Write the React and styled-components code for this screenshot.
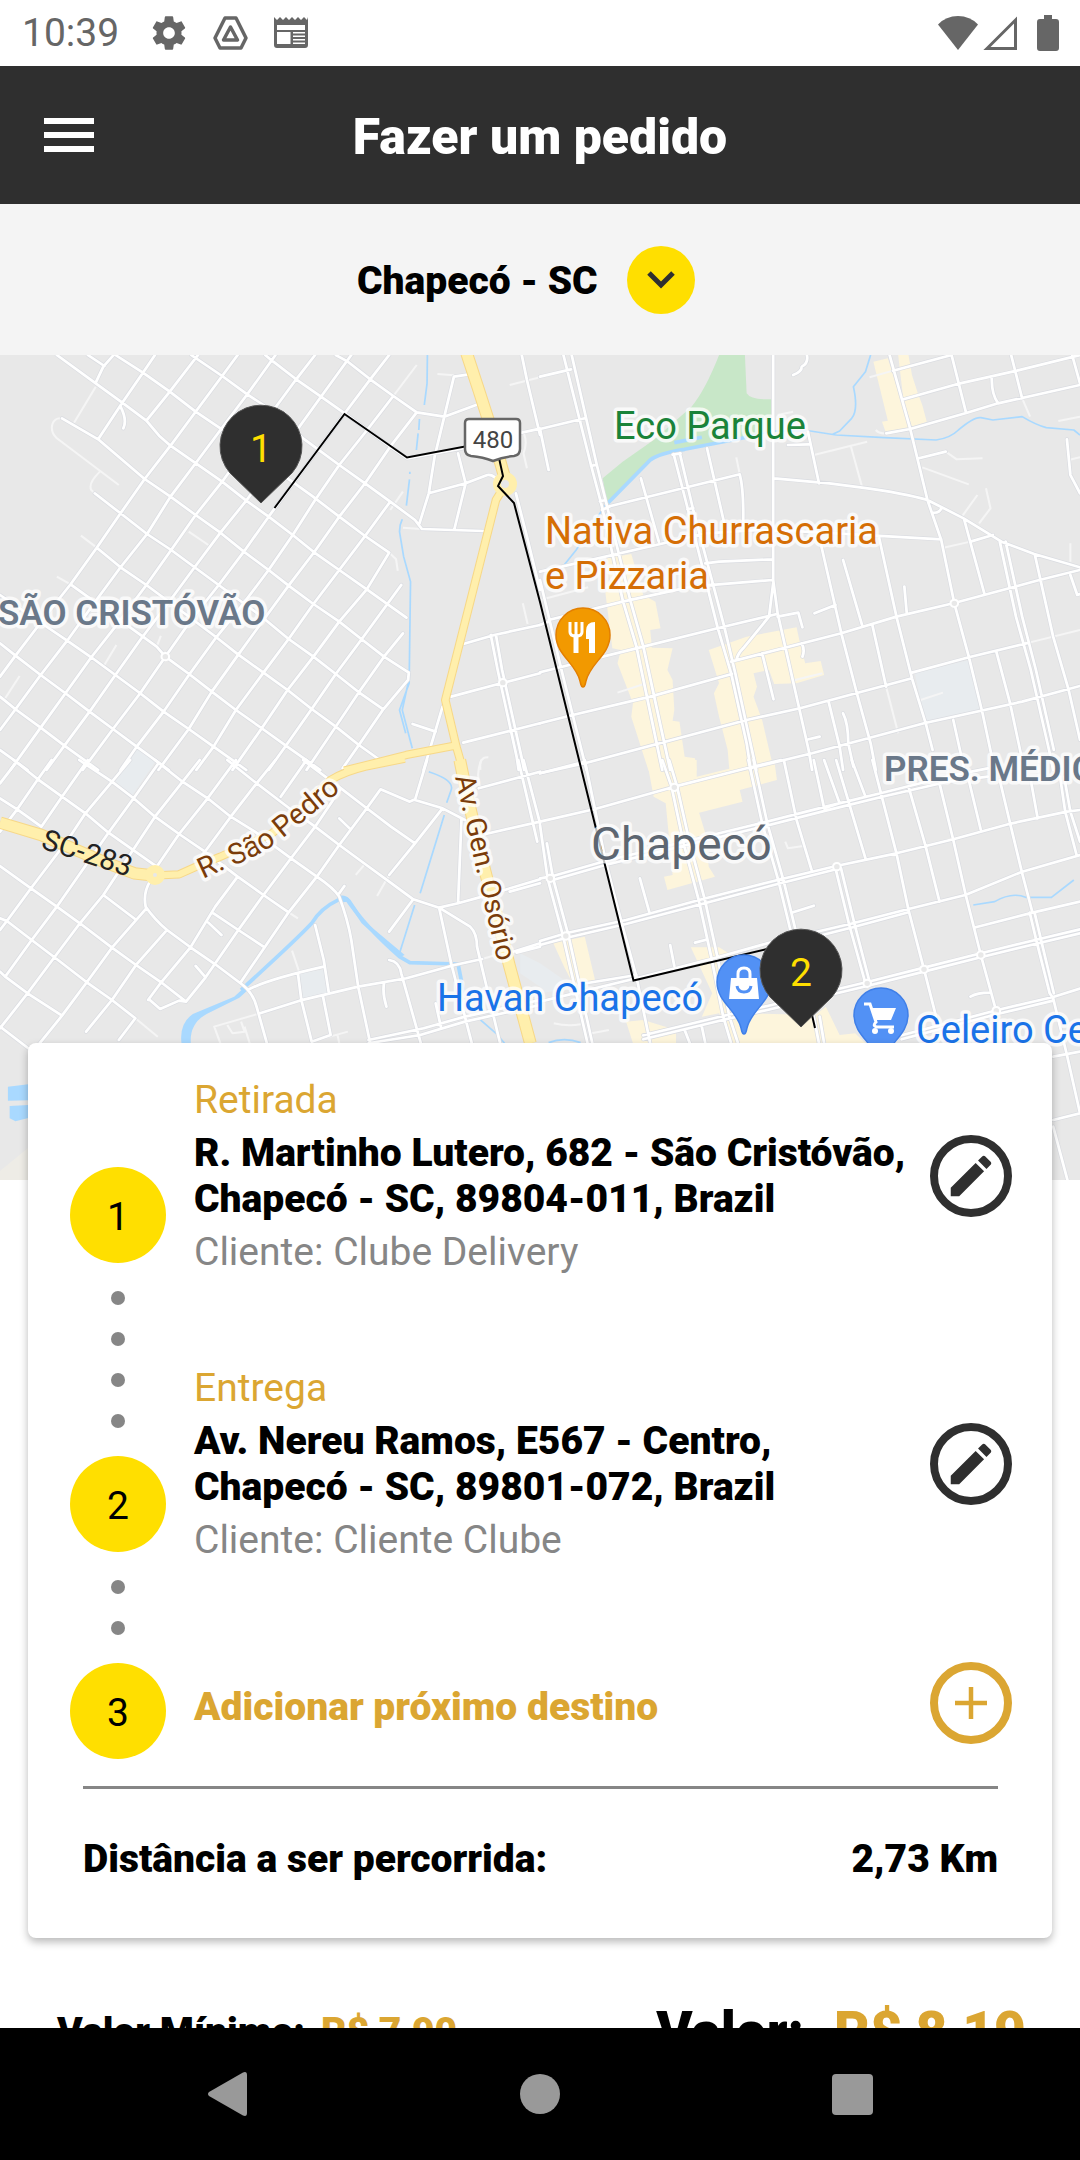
import React from "react";
import styled, { createGlobalStyle } from "styled-components";

const color = {
  ink: "#2f2f2f",
  yellow: "#ffdf00",
  gold: "#dba632",
  grey: "#868686",
  status: "#666666",
};

const GlobalStyle = createGlobalStyle`
  * { box-sizing: border-box; }
  body {
    margin: 0;
    background: #fff;
    color: #000;
    font-family: Roboto, "Noto Sans", sans-serif;
    font-size: 39px;
    line-height: 46px;
  }
  button, select { font: inherit; color: inherit; background: none; border: 0; padding: 0; cursor: pointer; }
  svg { display: block; }
`;

const Screen = styled.div`
  display: flex;
  flex-direction: column;
  height: 100vh;
  overflow: hidden;
`;

/* ---------- status bar ---------- */

const StatusBar = styled.div`
  flex: none;
  display: flex;
  align-items: center;
  justify-content: space-between;
  height: 66px;
  padding: 0 21px 0 22px;
  color: ${color.status};
`;

const StatusGroup = styled.div`
  display: flex;
  align-items: center;
  gap: ${(p) => p.$gap}px;
`;

const Clock = styled.time`
  margin-right: 6px;
`;

const BatterySlot = styled.span`
  padding-left: 14px;
`;

/* ---------- header ---------- */

const Header = styled.header`
  flex: none;
  display: grid;
  grid-template-columns: 50px 1fr 50px;
  align-items: center;
  height: 138px;
  padding: 0 44px;
  background: ${color.ink};
  color: #fff;
`;

const Title = styled.h1`
  margin: 0;
  padding-top: 3px;
  font-size: 50px;
  line-height: 58px;
  font-weight: 900;
  text-align: center;
`;

const IconButton = styled.button`
  display: grid;
  place-items: center;
`;

const Content = styled.main`
  flex: 1;
  min-height: 0;
  overflow-y: auto;
  scrollbar-width: none;
`;

const CityBar = styled.div`
  display: flex;
  align-items: center;
  justify-content: center;
  height: 151px;
  padding-right: 28px;
  background: #f4f4f4;
`;

const CityPicker = styled.label`
  display: grid;
  align-items: center;
`;

const CitySelect = styled.select`
  grid-area: 1 / 1;
  appearance: none;
  height: 68px;
  padding-top: 2px;
  padding-right: 97px;
  font-weight: 900;
`;

const CityChevron = styled.span`
  grid-area: 1 / 1;
  justify-self: end;
  display: grid;
  place-items: center;
  width: 68px;
  height: 68px;
  border-radius: 50%;
  background: ${color.yellow};
  pointer-events: none;
`;

const MapCanvas = styled.svg`
  width: 100%;
  height: auto;
  background: #e8e8e8;
`;

/* ---------- order card ---------- */

const Card = styled.section`
  position: relative;
  margin: -137px 28px 0;
  padding: 34px 40px 56px 42px;
  border-radius: 8px;
  background: #fff;
  box-shadow: 0 4px 8px rgba(0, 0, 0, 0.28);
`;

const Route = styled.div`
  display: flex;
  gap: 28px;
`;

const Rail = styled.div`
  flex: none;
  display: flex;
  flex-direction: column;
  align-items: center;
  gap: 28px;
  padding-top: 90px;
`;

const Badge = styled.span`
  display: grid;
  place-items: center;
  width: 96px;
  height: 96px;
  padding-top: 4px;
  border-radius: 50%;
  background: ${color.yellow};
`;

const Dots = styled.div`
  display: flex;
  flex-direction: column;
  gap: 27px;
`;

const Dot = styled.span`
  width: 14px;
  height: 14px;
  border-radius: 50%;
  background: ${color.grey};
`;

const Stops = styled.div`
  flex: 1;
  min-width: 0;
  display: flex;
  flex-direction: column;
  gap: 90px;
`;

const Stop = styled.article`
  display: flex;
  align-items: center;
  justify-content: space-between;
`;

const StopText = styled.div`
  display: flex;
  flex-direction: column;
  gap: 7px;
`;

const StopKind = styled.span`
  color: ${color.gold};
`;

const Address = styled.strong`
  font-weight: 900;
  white-space: pre-line;
`;

const Client = styled.span`
  color: ${color.grey};
`;

const Ring = styled.span`
  flex: none;
  display: grid;
  place-items: center;
  width: 82px;
  height: 82px;
  border: 8px solid ${(p) => p.$tone};
  border-radius: 50%;
  color: ${(p) => p.$tone};
`;

const AddStop = styled.button`
  display: flex;
  align-items: center;
  justify-content: space-between;
  margin-top: 9px;
  color: ${color.gold};
  font-weight: 900;
`;

const AddLabel = styled.span`
  padding-top: 8px;
`;

const Distance = styled.div`
  display: flex;
  justify-content: space-between;
  margin: 27px 14px 0 13px;
  padding-top: 47px;
  border-top: 3px solid ${color.grey};
  font-weight: 900;
`;

const Prices = styled.div`
  display: flex;
  align-items: center;
  justify-content: space-between;
  padding: 62px 54px 60px 57px;
`;

const Price = styled.div`
  display: flex;
  gap: ${(p) => (p.$large ? 30 : 16)}px;
  font-weight: 900;
  font-size: ${(p) => (p.$large ? 55 : 39)}px;
  line-height: ${(p) => (p.$large ? 64 : 46)}px;
`;

const Amount = styled.span`
  color: ${color.gold};
`;

/* ---------- system navigation ---------- */

const SystemNav = styled.nav`
  flex: none;
  display: flex;
  align-items: center;
  justify-content: center;
  gap: 272px;
  height: 132px;
  background: #000;
  color: #999;
`;

/* ---------- map data: four tiles, each in its own units ---------- */

const TILES = [
  {
    at: [0, 350],
    park: "M395 1190L445 1225L420 1260H345Z",
    built: "",
    green: "",
    water:
      "M1241 15L1240 100L1232 165M1218 207L1216 240M1214 250L1209 300M1190 365V372M1189 388L1180 467M1168 508L1162 525L1160 545L1172 620L1192 695L1188 1000L1160 1080L1178 1150M1188 985L1168 1080L1197 1195",
    waterWide: "",
    roads:
      "M165 15L278 100L355 158L425 212L462 257L495 287L645 395L715 452L780 500L850 555L912 607L985 660L1065 718L1180 803" +
      "M255 15L303 48M335 15L415 68L493 125L568 185L640 235L835 385L905 437L985 500L1060 558L1130 608" +
      "M555 15L645 78L718 133L765 165L880 265L985 345L1060 400L1133 455L1205 510L1225 537L1405 543" +
      "M770 15L790 32L860 88L932 140L1001 190L1120 280L1182 325L1350 294M975 15L1010 35L1075 88L1142 138L1210 187L1290 200L1390 162" +
      "M180 205L285 268L420 387L495 440L568 495L640 548L708 605L780 660L838 707L910 762L985 815L1050 868L1115 920L1187 968" +
      "M275 430L350 490L427 552L497 600L565 652L635 705L760 800L838 867L910 920L975 972L1042 1027L1113 1078" +
      "M281 593L350 652L425 705L555 805L628 862L692 914L765 968L835 1020L905 1077L975 1130L1042 1185L1100 1228" +
      "M205 703L455 890L480 920L550 973L615 1025L685 1080L760 1135L830 1187L930 1260" +
      "M0 735L195 872L265 922L335 975L407 1030L475 1085L548 1137L620 1190L715 1260" +
      "M0 880L45 917L118 975L190 1030L260 1085L328 1137L397 1190L490 1260M0 1040L45 1078L118 1133L187 1187L285 1260M0 1200L80 1260" +
      "M330 15L300 50L278 98M450 15L415 68L355 158L285 268M575 15L493 125L425 212" +
      "M690 15L645 78L568 185L495 287L420 387L350 490L281 593L205 703L150 775L45 917L0 980" +
      "M800 15L718 133L640 240L568 340L495 440L427 552L350 652L280 750L195 872L118 975L45 1078L0 1140" +
      "M915 15L860 88L805 165L645 395L568 495L497 600L425 705L335 830L265 922L190 1030L118 1133L30 1260" +
      "M1020 15L932 140L715 452L640 548L565 652L495 750L407 870L335 975L260 1085L187 1187L135 1260" +
      "M1130 15L1075 88L1001 190L780 500L708 605L635 705L555 810L480 920L407 1030L328 1137L240 1260" +
      "M1142 138L1066 240L985 345L915 450L850 555L780 660L700 770L628 862L550 973L475 1085L397 1190L350 1260" +
      "M1210 187L1133 290L1060 400L985 500L912 607L838 707L765 810L692 914L615 1025L548 1137L460 1260" +
      "M1133 455L1060 558L985 660L910 762L838 867L765 968L685 1080L620 1190L570 1260M1130 608L1065 718L985 815L910 920L835 1020L760 1135L675 1260" +
      "M1165 705L1050 868L975 972L905 1077L830 1187L780 1260M1170 850L1115 920L1042 1027L975 1130L890 1260M1187 968L1185 990L1113 1078L1042 1185L995 1255" +
      "M350 170Q370 210 358 235M1362 73L1318 80L1290 200L1262 320L1245 430L1218 520M1330 310L1352 400L1320 535M1245 430L1352 400L1415 375Q1435 372 1450 400" +
      "M1345 882L1435 855L1568 825M1310 1040L1455 1000L1568 970M1345 1178L1568 1120M1425 855L1445 960L1500 1220L1506 1260M1440 855L1458 960L1514 1220L1522 1260" +
      "M1285 1070L1265 1140L1230 1260M1198 1122L1265 1145M1515 15L1530 90L1568 255M1515 248L1568 236M1498 430L1530 560L1568 720",
    lanes:
      "M180 205C150 200 140 240 165 265L345 405M278 110L215 218M290 365Q255 400 265 420L275 430M235 557L281 593M165 680L205 703M1130 608L1150 628L1155 663M1170 425L1133 480M1210 45L1142 138M1270 72L1318 76M548 545L605 585M455 890L467 858M300 950L338 885M15 1045L57 978M1480 105L1568 82M1515 240Q1535 270 1520 310L1530 355M1518 760L1532 822M1170 533L1222 537M1395 1260Q1390 1220 1418 1222",
    main: "M1355 10L1390 120L1418 210L1470 400L1460 420",
    mainThin: "M1470 400L1440 450L1293 1050L1325 1190L1345 1262M1325 1186L1180 1215L1000 1262",
    circles: [[480, 920], [1460, 998]],
  },
  {
    at: [540, 350],
    park: "M1088 970L1245 930L1280 1085L1120 1115Z",
    built:
      "M195 625L265 612L300 735L335 755L350 835L320 840L325 893L385 895L370 960L385 990L390 1080L385 1112L405 1115L420 1220L450 1225L455 1262H315L265 1100L270 1060L225 940L235 900L210 895L190 730L205 700Z" +
      "M490 900L600 860L745 832L755 880L770 940L815 933L825 975L745 1000L680 1002L665 960L620 970L630 1010L620 1040L645 1110L670 1220L680 1262H550L545 1200L520 1100L505 1030L520 1000Z" +
      "M968 35L1010 25L1075 237L1005 250L993 215L1010 212ZM1040 15H1070L1080 75L1097 130L1110 165L1123 215L1080 230L1055 148Z",
    green:
      "M520 15H595L600 130Q610 147 650 148H675V240L600 260L420 297Q340 307 320 335L195 465L182 385L240 335L330 270L440 170Q480 120 520 15Z",
    water:
      "M190 465L105 600L70 645M600 260L680 243L785 243L860 255L1000 263L1150 270Q1190 265 1215 240Q1260 200 1280 203L1315 210L1400 200Q1440 225 1470 233L1550 240L1568 255M960 15L945 65L910 110Q925 180 905 205L870 243L850 253",
    waterWide: "M198 458L320 330Q345 310 420 298L600 262M390 278L470 262",
    roads:
      "M68 15L148 345L180 470L240 750L280 890L355 1260M92 15L165 345L195 470L262 750L300 890L378 1260M148 348L165 344M174 454L190 450" +
      "M388 312L430 480L515 830L555 970L600 1180L612 1260M406 310L445 480L535 830L567 970L628 1260M385 314L408 310M428 478L445 474M677 15V690L690 790L780 1200L790 1260" +
      "M0 80L90 58M25 360L0 237L130 205M180 480L205 468L580 373Q592 420 590 520M0 665L400 570L480 550L640 540L770 545L1165 568M480 640L520 635L675 628" +
      "M25 810L240 755L440 710L675 690M0 825L25 815M0 967L300 890L515 835L685 793M0 1120L95 1095L320 1040L557 972M0 1270L130 1240L600 1110L755 1075L1080 985" +
      "M555 935L875 850L1035 800L1200 760L1450 690L1568 660M1080 968L1245 922L1420 878M610 1255L790 1210L1115 1120L1400 1055L1568 1008" +
      "M1055 148L1220 100L1385 62L1568 15M1025 62L1195 15M1005 250L1075 237L1240 188L1330 160L1568 105" +
      "M680 385L840 400L930 412Q1060 430 1125 450L1230 505L1340 575L1435 612L1568 652M1015 15L1075 237L1125 450L1165 570L1203 760L1245 920L1285 1090L1320 1260" +
      "M778 245L810 400M815 580L875 850L920 1030L960 1180L975 1260M880 630L935 825M985 565L1035 800L1080 985L1120 1120L1140 1200M965 825L1005 1010" +
      "M1232 510L1290 730M1335 575L1382 800L1425 960L1478 1200L1490 1260M1352 575L1400 800L1440 960L1492 1200M1437 615L1490 860L1535 1020L1568 1170M1195 15L1237 188M1368 15L1400 145M1545 15L1568 100" +
      "M1312 80Q1310 130 1330 160M293 385L345 575M485 295L535 520M1540 675L1560 735L1568 732M1058 710L1065 790M570 930Q575 910 590 895L665 800L677 700M690 800L750 788L762 832M797 790L858 765" +
      "M645 910L678 1048M760 880Q770 900 762 920M838 1055L870 1190L880 1260M880 1090Q895 1120 895 1180L910 1250M1100 325L1178 305M1250 575L1315 555M1530 268L1540 375L1568 430M1140 488Q1160 490 1165 475" +
      "M1200 1110L1230 1250M1325 905L1365 1060L1400 1230M0 690L60 950L95 1095L135 1260M720 285L780 283M735 75Q760 65 760 50Q780 40 775 15M780 1168L812 1160",
    lanes:
      "M795 315L950 275M903 290L935 410M1178 305L1210 328L1285 325M1110 352L1245 403M1225 500L1270 435M1275 520L1308 475L1295 415M0 750L140 712M1420 878L1568 840M1005 1010L1040 1150M570 322L580 373M1165 595L1250 575M957 82L1025 62M690 195L735 185M1505 213L1568 200M225 1028L300 1003M740 990L820 970M1105 1050L1170 1028M1540 580V635M1400 145L1423 200M975 240Q985 252 1005 250M1535 330L1568 322",
    main: "",
    mainThin: "",
    circles: [[1203, 760]],
  },
  {
    at: [0, 760],
    park: "M375 0H455L385 105L335 65ZM870 640L945 628L955 700L880 715ZM1510 580L1568 610V680L1510 640Z",
    built: "",
    green: "",
    water: "M1245 35Q1320 60 1310 90L1297 128M1290 165L1220 400M1204 435L1160 580M1345 690L1350 720M1395 780L1440 820L1465 850",
    waterWide: "M700 690Q860 540 905 490Q930 445 985 418M1005 415Q1060 500 1160 590L1190 608L1330 612L1345 690",
    waterArea:
      "M527 850Q520 790 560 762L680 710L710 682L720 690L695 713L600 762Q550 790 554 850ZM980 410Q1000 400 1018 420L1060 485L1175 585L1160 592L1050 490L1008 425L985 428ZM23 980L82 973V1021L23 1022ZM28 1038L82 1035V1074L45 1084L28 1075Z",
    roads:
      "M40 0L110 58L180 110L248 160L315 218L455 320M230 0L325 65L388 115L450 170L520 222L595 275L690 350L765 405L838 457" +
      "M450 0L530 65L603 115L670 170L740 215L845 295L920 350Q970 385 985 410Q1010 480 1020 540L1040 680L1075 850" +
      "M660 0L745 70L840 145L915 200L985 255L1060 312L1130 365L1200 418L1275 443L1330 430L1400 410L1568 358M1480 395L1568 370M880 0L990 85L1065 145L1135 200L1205 250" +
      "M0 115L50 148L120 200M0 318L90 385L165 440L232 490L325 563L395 615L468 667L540 725M0 475L20 483L92 540L158 592L252 667L325 720L393 775M0 635L15 650L80 700L180 767M0 800L82 865" +
      "M300 405L393 478M435 365Q415 400 423 440Q450 480 485 510L553 562L625 613L705 675Q735 700 745 740L775 850M620 460L692 510L765 560M605 488L643 525M568 618L597 652" +
      "M45 10L0 70M150 0L110 58L50 148L0 215M255 0L180 110L120 200M378 0L248 160L200 235L90 385L20 483L0 510M460 10L388 115L315 218L165 440L92 540L15 650" +
      "M580 0L450 170L300 405L232 490L158 592L80 700L0 805M685 0L603 115L520 222L455 320M425 445L325 563L252 667L180 767L115 850M800 0L745 70L670 170L595 275L575 300M485 510L395 615L325 720L250 815" +
      "M890 0L815 110M690 350L625 440L553 562L468 667L430 720M990 85L915 200L845 295L765 405L692 510L597 652L540 725L520 722L465 747L435 720M393 775L345 840" +
      "M1200 120L1190 125L1105 88L1065 145L985 255L920 350L838 457L700 665M1285 145L1205 250L1130 345M1240 0L1205 120L1285 145L1350 180M1340 175L1330 430M1200 418L1130 515" +
      "M1275 443L1310 610L1370 850M1275 443L1365 500Q1385 520 1385 560L1452 850M1390 85L1568 35M1410 222L1568 185M1505 0L1560 245M1520 0L1568 190M720 690Q770 660 940 620M755 760L870 722L1040 680L1180 655L1320 615L1400 597M1490 575L1568 550" +
      "M915 495L940 600L955 700M865 640L875 720L905 845L960 825L938 710M1130 600Q1160 605 1165 640L1222 850M1115 670Q1110 700 1122 740M1070 840L1230 805L1350 770L1568 720M1070 850L1220 825L1350 785L1568 735M985 175L1015 205M985 400L1000 378M1265 730L1280 800M1500 578L1568 560",
    lanes: "M838 457L865 475M1130 345L1095 408M1060 312L1033 345M393 775L458 830M848 572L870 640M640 850L622 800L755 760M660 795L675 820L710 815L700 785M710 800L725 850M905 845L1010 815M980 825L985 850M1400 597L1440 585M1395 85Q1380 40 1398 0",
    main: "M0 188L120 225L300 305L390 340L450 347M1335 0L1355 100L1400 300L1480 620L1540 850",
    mainThin: "M440 347L520 343L570 320L640 290L790 220L880 140L960 60Q1000 35 1060 20L1175 -4",
    circles: [],
  },
  {
    at: [540, 760],
    park: "M0 610L70 660L65 690L0 700Z",
    built:
      "M310 0H455V50L555 25L550 0H680L688 60L580 90L588 125L462 158L480 220L490 320L508 350L370 390L360 350L385 345L365 130L330 110Z" +
      "M38 548L130 530L162 670L100 680L70 620ZM438 562L520 562L548 580L505 595L600 760L800 765L830 740L870 825L915 820L945 850H560L520 760L470 770L500 700ZM250 785L300 780L395 810V850H270Z",
    green: "",
    water: "M1258 435L1320 425Q1370 395 1410 412L1485 412L1550 360M25 848Q70 830 118 848",
    waterWide: "",
    roads:
      "M0 40L130 5M0 185L160 147L390 80L600 25L700 0M0 355L30 350L190 303L400 250L640 190L830 140L1000 97L1180 50L1300 25M30 362L190 315L400 262L640 202L830 152L1000 109L1180 66L1300 50" +
      "M0 543L75 520L250 480L470 418L690 360L860 318L1035 280L1200 238L1370 190L1530 155L1568 150M0 555L75 534L250 492L470 432L690 372L860 328" +
      "M0 725L280 655L505 595L660 550L900 492L1070 447L1235 405L1400 335L1568 285M820 525L900 504L1070 457M120 672L280 645" +
      "M300 826L540 766L660 738L950 666L1115 623L1280 580L1450 537L1568 508M300 838L540 778L660 750L950 678L1115 635L1280 592L1450 549L1568 520M1050 826L1325 751L1490 711L1568 686M1050 838L1325 763L1490 722M1265 502L1430 458L1568 425" +
      "M0 195L22 355L67 528L138 850M20 250L38 355L83 528L152 850M130 0L190 300L235 480L280 650L320 850M355 0L382 80L417 250L462 425L497 590L532 770L555 850M375 0L398 80L435 250L480 425L515 590L550 770L575 850" +
      "M605 0L645 190L693 365L727 510M620 0L660 190L708 365L742 510M795 770L810 850M812 770L825 850M858 325L898 495L945 670M874 325L914 495L958 670M708 0L745 180L790 335M795 0L825 145L870 130M825 0L870 130M860 0L945 295M905 0L945 110" +
      "M965 0L1035 280L1070 450L1115 628L1150 770M1070 80L1120 260L1160 425M1160 70L1200 240L1235 400L1280 585L1325 755M1245 60L1280 210M1335 60L1365 190L1400 340L1430 458M1425 60L1445 175M1510 50L1525 155L1558 285M1522 50L1540 155L1568 245" +
      "M1422 458L1442 545L1480 700L1490 715L1530 885L1568 1060M1436 458L1456 545L1492 700M1490 890L1568 875M1490 1080L1568 1060M1490 1100L1532 1262M290 355L317 455M378 555L390 618M450 548L480 540M735 457L795 437M1250 710Q1270 698 1305 698M420 810L435 850M470 800L480 850",
    lanes: "M712 245L720 265L765 258M40 790Q80 800 118 793M150 820L200 810",
    main: "",
    mainThin: "",
    circles: [[30, 355], [75, 528], [390, 82], [862, 320], [950, 670], [1115, 628], [1280, 585], [1325, 752]],
  },
];

const LAYERS = [
  { key: "park", fill: "#e8ecef" },
  { key: "built", fill: "#fdf5dc" },
  { key: "green", fill: "#c8e7c8" },
  { key: "waterArea", fill: "#a9d9ff" },
  { key: "water", stroke: "#a9d9ff", width: 5 },
  { key: "waterWide", stroke: "#a9d9ff", width: 11 },
  { key: "lanes", stroke: "#f5f5f5", width: 6 },
  { key: "roads", stroke: "#dadce1", width: 12 },
  { key: "roads", stroke: "#ffffff", width: 8 },
  { key: "mainThin", stroke: "#f7d888", width: 25 },
  { key: "main", stroke: "#f7d888", width: 37 },
  { key: "mainThin", stroke: "#ffefac", width: 19 },
  { key: "main", stroke: "#ffefac", width: 31 },
];

const tileTransform = ([x, y]) => `translate(${x} ${y}) scale(0.3444 0.3333)`;

const MapLabel = styled.text`
  font-family: Roboto, "Noto Sans", sans-serif;
  font-size: ${(p) => p.$size || 38}px;
  font-weight: ${(p) => p.$weight || 400};
  fill: ${(p) => p.$tone};
  stroke: ${(p) => (p.$plain ? "none" : "rgba(255, 255, 255, 0.75)")};
  stroke-width: 7px;
  stroke-linejoin: round;
  paint-order: stroke;
`;

const PinNumber = styled.text`
  font-family: Roboto, "Noto Sans", sans-serif;
  font-size: 39px;
  fill: ${color.yellow};
  text-anchor: middle;
`;

function StopPin({ x, y, number }) {
  return (
    <g transform={`translate(${x} ${y})`}>
      <path d="M0 57L-31 27A41 41 0 1 1 31 27Z" fill={color.ink} stroke="#555" strokeWidth="1" />
      <PinNumber y="16">{number}</PinNumber>
    </g>
  );
}

function PlacePin({ x, y, fill, edge, children }) {
  return (
    <g transform={`translate(${x} ${y})`}>
      <path d="M0 52C-2 52-2 50-3 46C-7 28-27 20-27 0A27 27 0 1 1 27 0C27 20 7 28 3 46C2 50 2 52 0 52Z" fill={fill} stroke={edge} strokeWidth="1.5" />
      {children}
    </g>
  );
}

function DeliveryMap() {
  return (
    <MapCanvas viewBox="0 355 1080 825" role="img" aria-label="Mapa da rota em Chapecó">
      <path d="M0 1171L28 1148V1180H0Z" fill="#eeece6" />
      {LAYERS.map((layer, i) => (
        <g key={i} fill={layer.fill || "none"} stroke={layer.stroke || "none"} strokeWidth={layer.width} strokeLinejoin="round" strokeLinecap={layer.key === "roads" ? "round" : "butt"}>
          {TILES.map((tile, t) => tile[layer.key] && <path key={t} d={tile[layer.key]} transform={tileTransform(tile.at)} />)}
        </g>
      ))}
      {TILES.map((tile, t) => (
        <g key={t} transform={tileTransform(tile.at)} fill="#e8e8e8" stroke="#fff" strokeWidth="6">
          {tile.circles.map(([cx, cy]) => (
            <circle key={`${cx}-${cy}`} cx={cx} cy={cy} r="11" />
          ))}
        </g>
      ))}
      <circle cx="505" cy="484" r="8" fill="#e8e8e8" stroke="#ffefac" strokeWidth="8" />
      <circle cx="155" cy="875" r="6" fill="#e8e8e8" stroke="#ffefac" strokeWidth="8" />
      <path d="M274.500 508L344.500 414L407 457.500L465 446.500L499 458L503 476L498 486L514 503L540 602L633.500 980.500L767 949M812 1015L815 1028" fill="none" stroke="#000" strokeWidth="2" />

      <path d="M469 419H516Q520 419 520 423V449Q520 455 514 456Q503 457 493 461Q483 457 471 456Q465 455 465 449V423Q465 419 469 419Z" fill="#fff" stroke="#666" strokeWidth="2.500" />
      <MapLabel x="493" y="448" textAnchor="middle" $size={24} $tone="#444" $plain>480</MapLabel>

      <MapLabel x="-2" y="625" $size={35} $weight={600} $tone="#6a7889">SÃO CRISTÓVÃO</MapLabel>
      <MapLabel x="614" y="439" $tone="#1a8339">Eco Parque</MapLabel>
      <MapLabel x="545" y="544" $tone="#d56e05">Nativa Churrascaria</MapLabel>
      <MapLabel x="545" y="589" $tone="#d56e05">e Pizzaria</MapLabel>
      <MapLabel x="591" y="860" $size={46} $tone="#5d6671">Chapecó</MapLabel>
      <MapLabel x="884" y="781" $size={35} $weight={600} $tone="#6a7889">PRES. MÉDIC</MapLabel>
      <MapLabel x="437" y="1011" $tone="#1a73e8">Havan Chapecó</MapLabel>
      <MapLabel x="916" y="1043" $tone="#1a73e8">Celeiro Ce</MapLabel>
      <MapLabel transform="translate(40 848) rotate(18)" $size={29} $tone="#222" $plain>SC-283</MapLabel>
      <path id="sao-pedro" d="M203 879L227 868Q262 856 288 834L350 783" fill="none" />
      <MapLabel $size={29} $tone="#7a3c0a">
        <textPath href="#sao-pedro">R. São Pedro</textPath>
      </MapLabel>
      <MapLabel transform="translate(455 777) rotate(77)" $size={28} $tone="#7a3c0a">Av. Gen. Osório</MapLabel>

      <PlacePin x={583} y={635} fill="#f29900" edge="#e37f00">
        <g fill="none" stroke="#fff">
          <path d="M-13-13V-3Q-13 1-7 1Q-1 1-1-3V-13M-7-13V0" strokeWidth="3" />
          <path d="M-7 0V18" strokeWidth="5" />
        </g>
        <path d="M12-13V18H6V4H3V-4Q3-13 12-13Z" fill="#fff" />
      </PlacePin>
      <PlacePin x={744} y={982} fill="#5291f5" edge="#3f7fe8">
        <path d="M-13-4H13L15 17H-15Z" fill="#fff" />
        <path d="M-6-4V-8Q-6-14 0-14Q6-14 6-8V-4" fill="none" stroke="#fff" strokeWidth="3" />
        <path d="M-7 4Q-6 10 0 10Q6 10 7 4" fill="none" stroke="#5291f5" strokeWidth="3" />
      </PlacePin>
      <PlacePin x={881} y={1015} fill="#5291f5" edge="#3f7fe8">
        <path d="M-17-11H-11L-5 7Q-9 11-4 12H13" fill="none" stroke="#fff" strokeWidth="3" />
        <path d="M-10-7H15L10 5H-6Z" fill="#fff" />
        <circle cx="-6" cy="16" r="3" fill="#fff" />
        <circle cx="10" cy="16" r="3" fill="#fff" />
      </PlacePin>

      <StopPin x={261} y={446} number="1" />
      <StopPin x={801} y={970} number="2" />
    </MapCanvas>
  );
}

/* ---------- icons ---------- */

const GearIcon = () => (
  <svg width="40" height="40" viewBox="0 0 24 24" fill="currentColor" aria-hidden="true">
    <path d="M19.430 12.980c.04-.32.07-.64.07-.98s-.03-.66-.07-.98l2.110-1.650c.19-.15.24-.42.12-.64l-2-3.460c-.12-.22-.39-.3-.61-.22l-2.490 1c-.52-.4-1.080-.73-1.690-.98l-.38-2.650C14.460 2.180 14.250 2 14 2h-4c-.25 0-.46.18-.49.42l-.38 2.650c-.61.25-1.170.59-1.690.98l-2.490-1c-.23-.09-.49 0-.61.22l-2 3.460c-.13.22-.07.49.12.64l2.110 1.650c-.04.32-.07.65-.07.98s.03.66.07.98l-2.110 1.650c-.19.15-.24.42-.12.64l2 3.460c.12.22.39.3.61.22l2.490-1c.52.4 1.080.73 1.690.98l.38 2.650c.03.24.24.42.49.42h4c.25 0 .46-.18.49-.42l.38-2.650c.61-.25 1.170-.59 1.690-.98l2.490 1c.23.09.49 0 .61-.22l2-3.460c.12-.22.07-.49-.12-.64l-2.110-1.650zM12 15.500c-1.930 0-3.500-1.570-3.500-3.500s1.570-3.500 3.500-3.500 3.500 1.570 3.500 3.500-1.570 3.500-3.500 3.500z" />
  </svg>
);

const DriveIcon = () => (
  <svg width="36" height="36" viewBox="0 0 36 36" fill="none" stroke="currentColor" strokeLinejoin="round" aria-hidden="true">
    <path d="M12 3H23L33 23L28 33H7L2 23Z" strokeWidth="3.500" />
    <path d="M17.500 12L24.500 25H10.500Z" strokeWidth="3.500" />
  </svg>
);

const NewsIcon = () => (
  <svg width="36" height="34" viewBox="0 0 36 34" aria-hidden="true">
    <path d="M1 1L4 4L7 1L10 4L13 1L16 4L19 1L22 4L25 1L28 4L31 1L34 4L35 1V29Q35 32 32 32H4Q1 32 1 29Z" fill="currentColor" />
    <path d="M4 9H32V14H4ZM4 16H17.500V28H4ZM20 16H32V17.500H20ZM20 19.500H32V21H20ZM20 23H32V24.500H20ZM20 26.500H32V28H20Z" fill="#fff" />
  </svg>
);

const WifiIcon = () => (
  <svg width="42" height="36" viewBox="0 0 42 36" fill="currentColor" aria-hidden="true">
    <path d="M1 9.500Q9 1 21 1T41 9.500L21 35Z" />
  </svg>
);

const SignalIcon = () => (
  <svg width="36" height="36" viewBox="0 0 36 36" fill="none" stroke="currentColor" strokeWidth="3" aria-hidden="true">
    <path d="M4 33.500L32.500 5V33.500Z" />
  </svg>
);

const BatteryIcon = () => (
  <svg width="22" height="38" viewBox="0 0 22 38" fill="currentColor" aria-hidden="true">
    <path d="M7 1H15V5H19Q22 5 22 8V34Q22 37 19 37H3Q0 37 0 34V8Q0 5 3 5H7Z" />
  </svg>
);

const MenuIcon = () => (
  <svg width="50" height="34" viewBox="0 0 50 34" fill="currentColor" aria-hidden="true">
    <path d="M0 0H50V6H0ZM0 14H50V20H0ZM0 28H50V34H0Z" />
  </svg>
);

const ChevronIcon = () => (
  <svg width="28" height="18" viewBox="0 0 28 18" fill="none" stroke={color.ink} strokeWidth="5" aria-hidden="true">
    <path d="M2 2L14 14L26 2" />
  </svg>
);

const PencilIcon = () => (
  <svg width="54" height="54" viewBox="0 0 24 24" fill="currentColor" aria-hidden="true">
    <path d="M3 17.250V21h3.750L17.810 9.940l-3.750-3.750L3 17.250zM20.710 7.040c.39-.39.39-1.020 0-1.410l-2.340-2.340c-.39-.39-1.020-.39-1.410 0l-1.830 1.830 3.750 3.750 1.830-1.830z" />
  </svg>
);

const PlusIcon = () => (
  <svg width="32" height="32" viewBox="0 0 32 32" fill="none" stroke="currentColor" strokeWidth="4.500" aria-hidden="true">
    <path d="M16 0V32M0 16H32" />
  </svg>
);

const BackIcon = () => (
  <svg width="40" height="44" viewBox="0 0 40 44" fill="currentColor" aria-hidden="true">
    <path d="M1 20L35 0.500Q39 -1 39 3V41Q39 45 35 43.500L1 24Q-1 22 1 20Z" />
  </svg>
);

const HomeIcon = () => (
  <svg width="40" height="40" viewBox="0 0 40 40" fill="currentColor" aria-hidden="true">
    <circle cx="20" cy="20" r="20" />
  </svg>
);

const RecentIcon = () => (
  <svg width="41" height="41" viewBox="0 0 41 41" fill="currentColor" aria-hidden="true">
    <rect width="41" height="41" rx="4" />
  </svg>
);

/* ---------- page ---------- */

const STOPS = [
  { kind: "Retirada", address: "R. Martinho Lutero, 682 - São Cristóvão,\nChapecó - SC, 89804-011, Brazil", client: "Clube Delivery" },
  { kind: "Entrega", address: "Av. Nereu Ramos, E567 - Centro,\nChapecó - SC, 89801-072, Brazil", client: "Cliente Clube" },
];

const DotColumn = ({ count }) => (
  <Dots aria-hidden="true">
    {Array.from({ length: count }, (_, i) => (
      <Dot key={i} />
    ))}
  </Dots>
);

export default function App() {
  return (
    <Screen>
      <GlobalStyle />
      <StatusBar>
        <StatusGroup $gap={24}>
          <Clock>10:39</Clock>
          <GearIcon />
          <DriveIcon />
          <NewsIcon />
        </StatusGroup>
        <StatusGroup $gap={4}>
          <WifiIcon />
          <SignalIcon />
          <BatterySlot>
            <BatteryIcon />
          </BatterySlot>
        </StatusGroup>
      </StatusBar>
      <Header>
        <IconButton type="button" aria-label="Abrir menu">
          <MenuIcon />
        </IconButton>
        <Title>Fazer um pedido</Title>
      </Header>
      <Content>
        <CityBar>
          <CityPicker>
            <CitySelect aria-label="Cidade" defaultValue="chapeco">
              <option value="chapeco">Chapecó - SC</option>
            </CitySelect>
            <CityChevron>
              <ChevronIcon />
            </CityChevron>
          </CityPicker>
        </CityBar>
        <DeliveryMap />
        <Card>
          <Route>
            <Rail>
              <Badge>1</Badge>
              <DotColumn count={4} />
              <Badge>2</Badge>
              <DotColumn count={2} />
              <Badge>3</Badge>
            </Rail>
            <Stops>
              {STOPS.map((stop) => (
                <Stop key={stop.kind}>
                  <StopText>
                    <StopKind>{stop.kind}</StopKind>
                    <Address>{stop.address}</Address>
                    <Client>Cliente: {stop.client}</Client>
                  </StopText>
                  <IconButton type="button" aria-label={`Editar ${stop.kind}`}>
                    <Ring $tone={color.ink}>
                      <PencilIcon />
                    </Ring>
                  </IconButton>
                </Stop>
              ))}
              <AddStop type="button">
                <AddLabel>Adicionar próximo destino</AddLabel>
                <Ring $tone={color.gold}>
                  <PlusIcon />
                </Ring>
              </AddStop>
            </Stops>
          </Route>
          <Distance>
            <span>Distância a ser percorrida:</span>
            <span>2,73 Km</span>
          </Distance>
        </Card>
        <Prices>
          <Price>
            <span>Valor Mínimo:</span>
            <Amount>R$ 7,90</Amount>
          </Price>
          <Price $large>
            <span>Valor:</span>
            <Amount>R$ 8,19</Amount>
          </Price>
        </Prices>
      </Content>
      <SystemNav aria-label="Navegação do sistema">
        <IconButton type="button" aria-label="Voltar">
          <BackIcon />
        </IconButton>
        <IconButton type="button" aria-label="Início">
          <HomeIcon />
        </IconButton>
        <IconButton type="button" aria-label="Recentes">
          <RecentIcon />
        </IconButton>
      </SystemNav>
    </Screen>
  );
}
